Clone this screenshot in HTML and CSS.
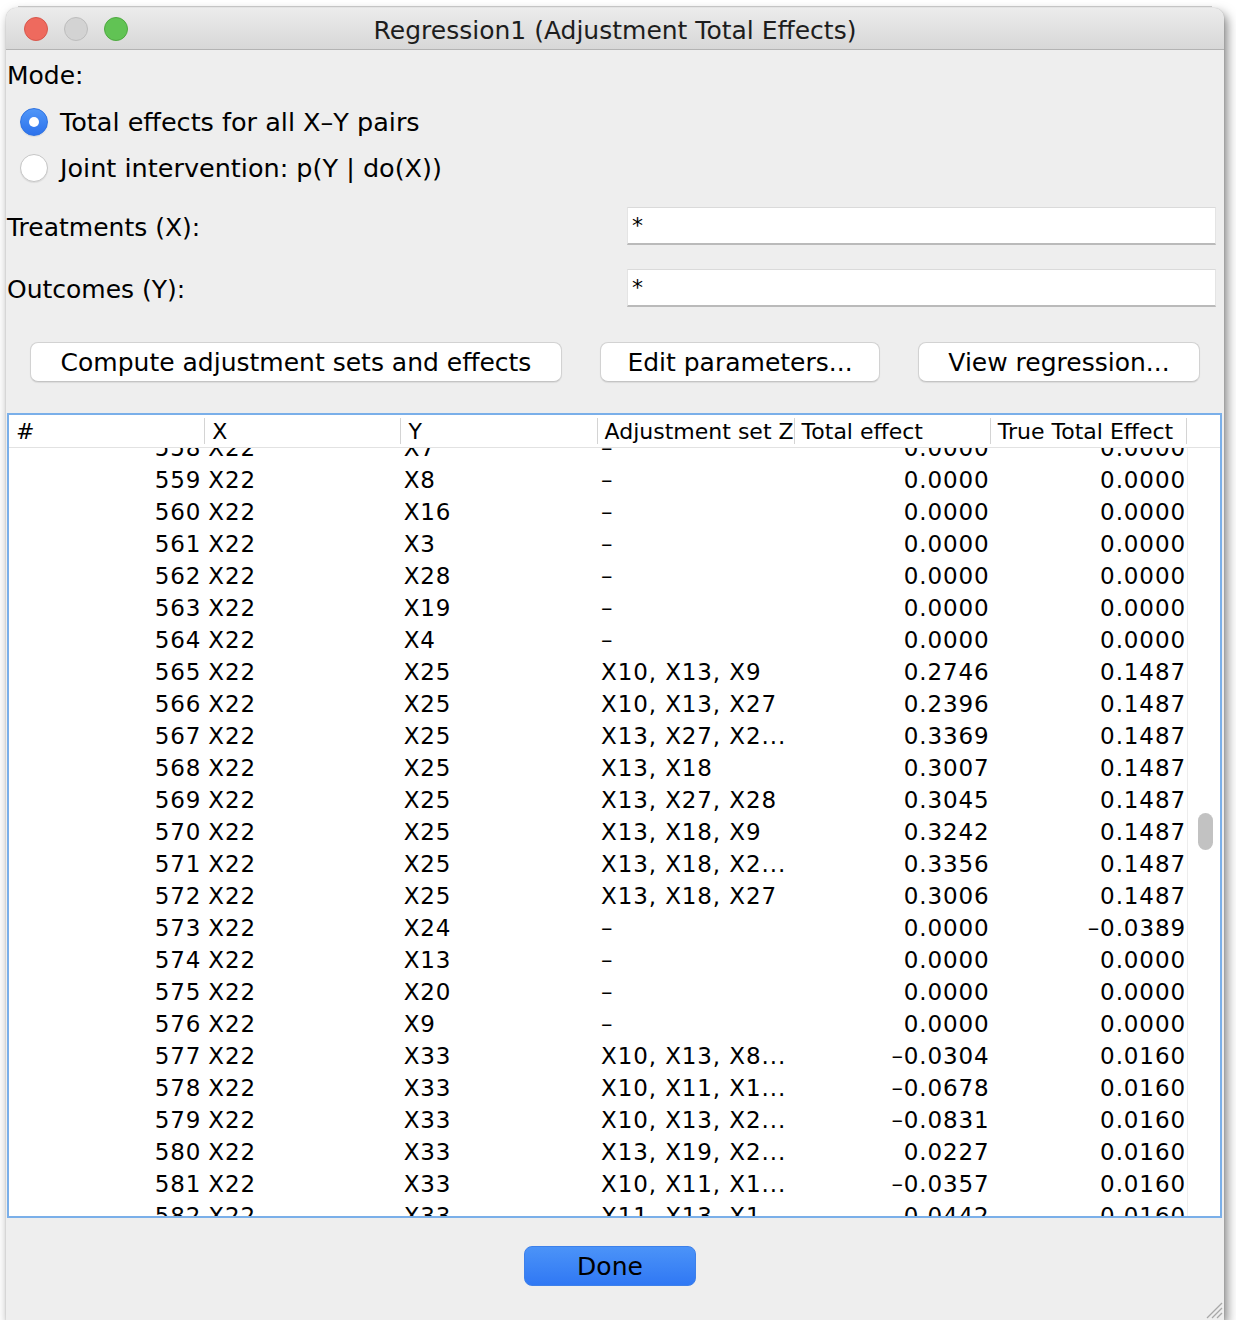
FILE: index.html
```html
<!DOCTYPE html>
<html lang="en">
<head>
    <meta charset="UTF-8">
    <title>Regression1 (Adjustment Total Effects)</title>
    <link rel="stylesheet" href="styles.css">
</head>
<body>

    <div class="window">

        <!-- Title bar -->
        <div class="titlebar">
            <div class="lights">
                <span class="light close"></span>
                <span class="light minimize"></span>
                <span class="light zoom"></span>
            </div>
            <div class="title">Regression1 (Adjustment Total Effects)</div>
            <div></div>
        </div>

        <div class="content">
            <div class="mode-label">Mode:</div>

            <div class="radios">
                <label class="radio"><span class="radio-dot checked"></span>Total effects for all X–Y pairs</label>
                <label class="radio"><span class="radio-dot"></span>Joint intervention: p(Y | do(X))</label>
            </div>

            <div class="field-row">
                <span class="field-label">Treatments (X):</span>
                <div class="field">*</div>
            </div>
            <div class="field-row second">
                <span class="field-label">Outcomes (Y):</span>
                <div class="field">*</div>
            </div>

            <div class="buttons">
                <button class="btn compute">Compute adjustment sets and effects</button>
                <button class="btn edit">Edit parameters...</button>
                <button class="btn view">View regression...</button>
            </div>

            <!-- Results table -->
            <div class="table">
                <div class="table-head">
                    <div class="th">#</div>
                    <div class="th">X</div>
                    <div class="th">Y</div>
                    <div class="th">Adjustment set Z</div>
                    <div class="th">Total effect</div>
                    <div class="th">True Total Effect</div>
                    <div class="th-blank"></div>
                </div>
                <div class="table-body">
                    <div class="rows">
                        <div class="row"><span class="c-num">558</span><span class="c-x">X22</span><span class="c-y">X7</span><span class="c-adj">–</span><span class="c-te">0.0000</span><span class="c-tt">0.0000</span></div>
                        <div class="row"><span class="c-num">559</span><span class="c-x">X22</span><span class="c-y">X8</span><span class="c-adj">–</span><span class="c-te">0.0000</span><span class="c-tt">0.0000</span></div>
                        <div class="row"><span class="c-num">560</span><span class="c-x">X22</span><span class="c-y">X16</span><span class="c-adj">–</span><span class="c-te">0.0000</span><span class="c-tt">0.0000</span></div>
                        <div class="row"><span class="c-num">561</span><span class="c-x">X22</span><span class="c-y">X3</span><span class="c-adj">–</span><span class="c-te">0.0000</span><span class="c-tt">0.0000</span></div>
                        <div class="row"><span class="c-num">562</span><span class="c-x">X22</span><span class="c-y">X28</span><span class="c-adj">–</span><span class="c-te">0.0000</span><span class="c-tt">0.0000</span></div>
                        <div class="row"><span class="c-num">563</span><span class="c-x">X22</span><span class="c-y">X19</span><span class="c-adj">–</span><span class="c-te">0.0000</span><span class="c-tt">0.0000</span></div>
                        <div class="row"><span class="c-num">564</span><span class="c-x">X22</span><span class="c-y">X4</span><span class="c-adj">–</span><span class="c-te">0.0000</span><span class="c-tt">0.0000</span></div>
                        <div class="row"><span class="c-num">565</span><span class="c-x">X22</span><span class="c-y">X25</span><span class="c-adj">X10, X13, X9</span><span class="c-te">0.2746</span><span class="c-tt">0.1487</span></div>
                        <div class="row"><span class="c-num">566</span><span class="c-x">X22</span><span class="c-y">X25</span><span class="c-adj">X10, X13, X27</span><span class="c-te">0.2396</span><span class="c-tt">0.1487</span></div>
                        <div class="row"><span class="c-num">567</span><span class="c-x">X22</span><span class="c-y">X25</span><span class="c-adj">X13, X27, X2...</span><span class="c-te">0.3369</span><span class="c-tt">0.1487</span></div>
                        <div class="row"><span class="c-num">568</span><span class="c-x">X22</span><span class="c-y">X25</span><span class="c-adj">X13, X18</span><span class="c-te">0.3007</span><span class="c-tt">0.1487</span></div>
                        <div class="row"><span class="c-num">569</span><span class="c-x">X22</span><span class="c-y">X25</span><span class="c-adj">X13, X27, X28</span><span class="c-te">0.3045</span><span class="c-tt">0.1487</span></div>
                        <div class="row"><span class="c-num">570</span><span class="c-x">X22</span><span class="c-y">X25</span><span class="c-adj">X13, X18, X9</span><span class="c-te">0.3242</span><span class="c-tt">0.1487</span></div>
                        <div class="row"><span class="c-num">571</span><span class="c-x">X22</span><span class="c-y">X25</span><span class="c-adj">X13, X18, X2...</span><span class="c-te">0.3356</span><span class="c-tt">0.1487</span></div>
                        <div class="row"><span class="c-num">572</span><span class="c-x">X22</span><span class="c-y">X25</span><span class="c-adj">X13, X18, X27</span><span class="c-te">0.3006</span><span class="c-tt">0.1487</span></div>
                        <div class="row"><span class="c-num">573</span><span class="c-x">X22</span><span class="c-y">X24</span><span class="c-adj">–</span><span class="c-te">0.0000</span><span class="c-tt">–0.0389</span></div>
                        <div class="row"><span class="c-num">574</span><span class="c-x">X22</span><span class="c-y">X13</span><span class="c-adj">–</span><span class="c-te">0.0000</span><span class="c-tt">0.0000</span></div>
                        <div class="row"><span class="c-num">575</span><span class="c-x">X22</span><span class="c-y">X20</span><span class="c-adj">–</span><span class="c-te">0.0000</span><span class="c-tt">0.0000</span></div>
                        <div class="row"><span class="c-num">576</span><span class="c-x">X22</span><span class="c-y">X9</span><span class="c-adj">–</span><span class="c-te">0.0000</span><span class="c-tt">0.0000</span></div>
                        <div class="row"><span class="c-num">577</span><span class="c-x">X22</span><span class="c-y">X33</span><span class="c-adj">X10, X13, X8...</span><span class="c-te">–0.0304</span><span class="c-tt">0.0160</span></div>
                        <div class="row"><span class="c-num">578</span><span class="c-x">X22</span><span class="c-y">X33</span><span class="c-adj">X10, X11, X1...</span><span class="c-te">–0.0678</span><span class="c-tt">0.0160</span></div>
                        <div class="row"><span class="c-num">579</span><span class="c-x">X22</span><span class="c-y">X33</span><span class="c-adj">X10, X13, X2...</span><span class="c-te">–0.0831</span><span class="c-tt">0.0160</span></div>
                        <div class="row"><span class="c-num">580</span><span class="c-x">X22</span><span class="c-y">X33</span><span class="c-adj">X13, X19, X2...</span><span class="c-te">0.0227</span><span class="c-tt">0.0160</span></div>
                        <div class="row"><span class="c-num">581</span><span class="c-x">X22</span><span class="c-y">X33</span><span class="c-adj">X10, X11, X1...</span><span class="c-te">–0.0357</span><span class="c-tt">0.0160</span></div>
                        <div class="row"><span class="c-num">582</span><span class="c-x">X22</span><span class="c-y">X33</span><span class="c-adj">X11, X13, X1...</span><span class="c-te">–0.0442</span><span class="c-tt">0.0160</span></div>
                    </div>
                    <div class="scrollbar">
                        <div class="thumb"></div>
                    </div>
                </div>
            </div>

            <div class="footer">
                <button class="done">Done</button>
            </div>
        </div>

        <!-- Resize grip -->
        <svg class="grip" width="22" height="22" viewBox="0 0 22 22">
            <line x1="21" y1="6" x2="6" y2="21" stroke="#a8a8a8" stroke-width="1.2"/>
            <line x1="21" y1="11" x2="11" y2="21" stroke="#a8a8a8" stroke-width="1.2"/>
            <line x1="21" y1="16" x2="16" y2="21" stroke="#a8a8a8" stroke-width="1.2"/>
        </svg>
    </div>

</body>
</html>
```

FILE: styles.css
```css
/* Reset */
* {
    margin: 0;
    padding: 0;
    box-sizing: border-box;
}

body {
    font-family: "DejaVu Sans", Verdana, sans-serif;
    background-color: #ffffff;
    color: #000000;
}

/* Window frame */
.window {
    position: relative;
    width: 1218px;
    height: 1312px;
    margin: 8px 0 0 6px;
    background-color: #eeeeee;
    border-radius: 10px 10px 0 0;
    box-shadow: 0 0 1px rgba(0, 0, 0, 0.35), 3px 5px 11px rgba(0, 0, 0, 0.5);
}

.window::before {
    content: "";
    position: absolute;
    top: -2px;
    left: 12px;
    right: 12px;
    height: 1px;
    background-color: #c4c4c4;
}

/* Title bar */
.titlebar {
    display: grid;
    grid-template-columns: 1fr auto 1fr;
    align-items: center;
    height: 42px;
    border-radius: 10px 10px 0 0;
    background: linear-gradient(#ececec, #d7d7d7);
    border-bottom: 1px solid #b3b3b3;
}

.lights {
    display: flex;
    gap: 16px;
    padding-left: 18px;
}

.light {
    width: 24px;
    height: 24px;
    border-radius: 50%;
}

.light.close {
    background-color: #ee6a5e;
    border: 1px solid #d8574c;
}

.light.minimize {
    background-color: #d3d3d3;
    border: 1px solid #bdbdbd;
}

.light.zoom {
    background-color: #61c354;
    border: 1px solid #4ea940;
}

.title {
    font-size: 25px;
    padding-top: 4px;
    color: #1d1d1d;
}

/* Form area */
.content {
    display: flex;
    flex-direction: column;
}

.mode-label {
    font-size: 25px;
    line-height: 29px;
    padding: 11px 0 0 1px;
}

.radios {
    margin-top: 9px;
}

.radio {
    display: flex;
    align-items: center;
    gap: 12px;
    height: 46px;
    padding-left: 14px;
    font-size: 25.5px;
}

.radio-dot {
    width: 28px;
    height: 28px;
    border-radius: 50%;
    background-color: #ffffff;
    border: 1px solid #c6c6c6;
    box-shadow: 0 1px 1px rgba(0, 0, 0, 0.08);
    display: flex;
    align-items: center;
    justify-content: center;
}

.radio-dot.checked {
    background: linear-gradient(#4f96f8, #2d72ec);
    border-color: #2f72e0;
}

.radio-dot.checked::after {
    content: "";
    width: 10px;
    height: 10px;
    border-radius: 50%;
    background-color: #ffffff;
}

.field-row {
    display: grid;
    grid-template-columns: 620px 1fr;
    align-items: center;
    padding: 0 8px 0 1px;
    margin-top: 16px;
}

.field-row.second {
    margin-top: 24px;
}

.field-label {
    font-size: 25px;
    padding-top: 3px;
}

.field {
    height: 38px;
    padding: 5px 4px;
    font-size: 22px;
    line-height: 26px;
    background-color: #ffffff;
    border: 1px solid #e4e4e4;
    border-top-color: #dadada;
    border-bottom: 2px solid #bababa;
}

/* Action buttons */
.buttons {
    display: flex;
    gap: 38px;
    padding-left: 24px;
    margin-top: 35px;
}

.btn {
    height: 40px;
    font-family: inherit;
    font-size: 25px;
    color: #000000;
    background-color: #ffffff;
    border: 1px solid #d2d2d2;
    border-bottom-color: #c4c4c4;
    border-radius: 8px;
    box-shadow: 0 1px 1px rgba(0, 0, 0, 0.08);
}

.btn.compute {
    width: 532px;
}

.btn.edit {
    width: 280px;
}

.btn.view {
    width: 282px;
}

/* Table */
.table {
    display: flex;
    flex-direction: column;
    height: 805px;
    margin: 31px 2px 0 1px;
    border: 2px solid #7aafe9;
    background-color: #ffffff;
}

.table-head {
    display: grid;
    grid-template-columns: repeat(6, 1fr) 33px;
    align-items: center;
    height: 33px;
    border-bottom: 1px solid #e2e2e2;
    font-size: 22px;
}

.th {
    height: 26px;
    line-height: 28px;
    padding-left: 7px;
    border-right: 1px solid #d4d4d4;
    white-space: nowrap;
}

.table-body {
    display: flex;
    flex: 1;
    overflow: hidden;
}

.rows {
    flex: 1;
    margin-top: -16px;
}

.row {
    display: grid;
    grid-template-columns: repeat(6, 1fr);
    height: 32px;
    line-height: 32px;
    font-size: 23px;
    letter-spacing: 0.9px;
    white-space: nowrap;
}

.c-num {
    text-align: right;
    padding-right: 4px;
}

.c-x,
.c-y,
.c-adj {
    padding-left: 3px;
}

.c-y {
    padding-left: 2px;
}

.c-te,
.c-tt {
    text-align: right;
    padding-right: 1px;
}

.scrollbar {
    width: 33px;
    padding: 365px 0 0 10px;
    border-left: 1px solid #ededed;
}

.thumb {
    width: 15px;
    height: 37px;
    border-radius: 8px;
    background-color: #c2c2c2;
}

/* Bottom bar */
.footer {
    display: flex;
    justify-content: center;
    padding-right: 10px;
    margin-top: 28px;
}

.done {
    width: 172px;
    height: 40px;
    font-family: inherit;
    font-size: 25px;
    color: #000000;
    background: linear-gradient(#4b93f8, #3078f4);
    border: 1px solid #3d80ea;
    border-radius: 8px;
}

.grip {
    position: absolute;
    right: 1px;
    bottom: 1px;
}
```
